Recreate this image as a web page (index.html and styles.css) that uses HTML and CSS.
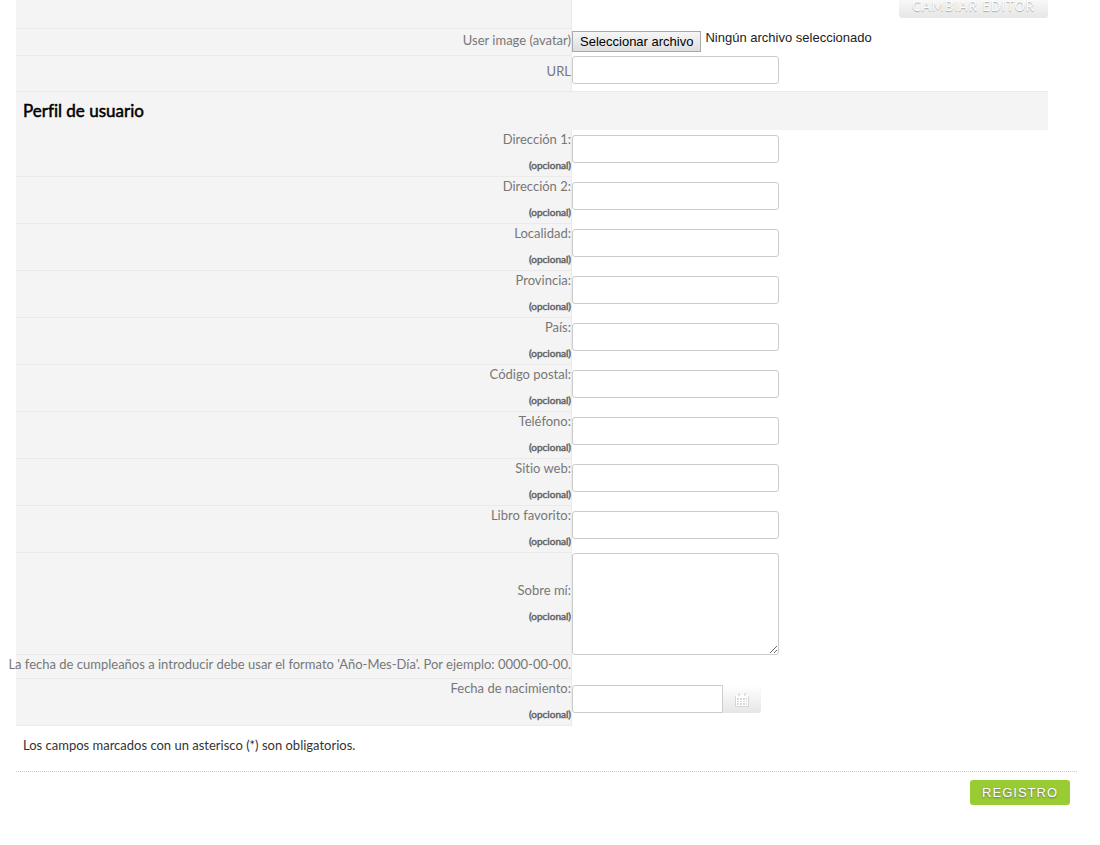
FILE: index.html
```html
<!DOCTYPE html>
<html lang="es">
<head>
<meta charset="UTF-8">
<meta name="viewport" content="width=device-width, initial-scale=1.0">
<title>Registro</title>
<link rel="stylesheet" href="styles.css">
</head>
<body>

<form class="container">
  <div class="fields">
    <div class="row row-editor">
      <div class="name"></div>
      <div class="field"><button type="button" class="btn-grey">CAMBIAR EDITOR</button></div>
    </div>
    <div class="row row-file">
      <div class="name"><label for="avatar">User image (avatar)</label></div>
      <div class="field">
        <input type="file" id="avatar" class="file-input">
        <label for="avatar" class="file-button">Seleccionar archivo</label>
        <span class="file-text">Ningún archivo seleccionado</span>
      </div>
    </div>
    <div class="row row-url">
      <div class="name"><label for="url">URL</label></div>
      <div class="field"><input type="text" id="url"></div>
    </div>

    <h2>Perfil de usuario</h2>

    <div class="row">
      <div class="name"><label for="direccion1">Dirección 1:</label><small>(opcional)</small></div>
      <div class="field"><input type="text" id="direccion1"></div>
    </div>
    <div class="row">
      <div class="name"><label for="direccion2">Dirección 2:</label><small>(opcional)</small></div>
      <div class="field"><input type="text" id="direccion2"></div>
    </div>
    <div class="row">
      <div class="name"><label for="localidad">Localidad:</label><small>(opcional)</small></div>
      <div class="field"><input type="text" id="localidad"></div>
    </div>
    <div class="row">
      <div class="name"><label for="provincia">Provincia:</label><small>(opcional)</small></div>
      <div class="field"><input type="text" id="provincia"></div>
    </div>
    <div class="row">
      <div class="name"><label for="pais">País:</label><small>(opcional)</small></div>
      <div class="field"><input type="text" id="pais"></div>
    </div>
    <div class="row">
      <div class="name"><label for="postal">Código postal:</label><small>(opcional)</small></div>
      <div class="field"><input type="text" id="postal"></div>
    </div>
    <div class="row">
      <div class="name"><label for="telefono">Teléfono:</label><small>(opcional)</small></div>
      <div class="field"><input type="text" id="telefono"></div>
    </div>
    <div class="row">
      <div class="name"><label for="web">Sitio web:</label><small>(opcional)</small></div>
      <div class="field"><input type="text" id="web"></div>
    </div>
    <div class="row">
      <div class="name"><label for="libro">Libro favorito:</label><small>(opcional)</small></div>
      <div class="field"><input type="text" id="libro"></div>
    </div>
    <div class="row row-about">
      <div class="name"><label for="sobre">Sobre mí:</label><small>(opcional)</small></div>
      <div class="field"><textarea id="sobre"></textarea></div>
    </div>
    <div class="row">
      <div class="name name-help">La fecha de cumpleaños a introducir debe usar el formato 'Año-Mes-Día'. Por ejemplo: 0000-00-00.</div>
      <div class="field"></div>
    </div>
    <div class="row">
      <div class="name"><label for="fecha">Fecha de nacimiento:</label><small>(opcional)</small></div>
      <div class="field">
        <input type="text" id="fecha" class="date-input">
        <button type="button" class="btn-grey btn-date" aria-label="Calendario">
          <svg width="14" height="14" viewBox="0 0 14 14">
            <path d="M0 3h14v11H0z" fill="#d6d6d6"/>
            <path d="M1 2h12v11H1z" fill="#fff"/>
            <path d="M3 0h2v3H3zM9 0h2v3H9z" fill="#e2e2e2"/>
            <path d="M2 5h2v2H2zM5 5h2v2H5zM8 5h2v2H8zM11 5h1v2h-1zM2 8h2v1H2zM5 8h2v1H5zM8 8h2v1H8zM11 8h1v1h-1zM2 10h2v2H2zM5 10h2v2H5zM8 10h2v2H8zM11 10h1v2h-1z" fill="#d8d8d8"/>
          </svg>
        </button>
      </div>
    </div>
  </div>

  <p class="note">Los campos marcados con un asterisco (*) son obligatorios.</p>

  <div class="actions">
    <button type="submit" class="btn-green">REGISTRO</button>
  </div>
</form>

</body>
</html>
```
FILE: styles.css
```css
* {
  box-sizing: border-box;
}

body {
  font-family: Lato, sans-serif;
  font-size: 13px;
  line-height: 18px;
  font-variant-ligatures: none;
  color: #333;
  background-color: #fff;
  margin: 0;
}

.container {
  margin: 0 23px 0 16px;
}

.fields {
  margin-right: 29px;
}

/* Rows */
.row {
  display: grid;
  grid-template-columns: minmax(0, 556fr) minmax(0, 476fr);
}

.name {
  display: flex;
  flex-direction: column;
  align-items: flex-end;
  justify-content: center;
  padding-bottom: 2px;
  color: #777;
  background-color: #f4f4f4;
  border-right: 1px solid #eaeaea;
  border-bottom: 1px solid #eaeaea;
}

.name-help {
  padding-bottom: 5px;
  white-space: nowrap;
}

small {
  margin-top: 8px;
  font-size: 10px;
  color: #666;
  -webkit-text-stroke: 0.5px #666;
}

.field {
  display: flex;
  align-items: flex-start;
  padding-top: 5px;
}

.row-editor {
  height: 29px;
  grid-template-rows: 100%;
}

.row-editor .field {
  align-items: flex-end;
  justify-content: flex-end;
  padding: 0 0 11px;
}

.row-file {
  height: 27px;
}

.row-file .name {
  padding-bottom: 4px;
}

.row-url {
  height: 36px;
}

.row-url .name {
  padding-bottom: 6px;
}

.row-url .field,
.row-about .field {
  padding-top: 0;
}

h2 {
  margin: -1px 0 0;
  padding: 10px 7px;
  font-size: 17px;
  line-height: 18px;
  font-weight: normal;
  color: #000;
  -webkit-text-stroke: 0.5px #000;
  background-color: #f4f4f4;
  border-top: 1px solid #eaeaea;
}

/* Inputs */
input[type="text"],
textarea {
  width: 207px;
  height: 28px;
  padding: 4px 6px;
  border: 1px solid #ccc;
  border-radius: 3px;
  font-family: Lato, sans-serif;
  font-size: 13px;
}

textarea {
  display: block;
  height: 102px;
}

input.date-input {
  width: 151px;
  margin-top: 1px;
  border-radius: 3px 0 0 3px;
}

.row-file .field {
  position: relative;
  padding-top: 2px;
  font-family: "Liberation Sans", sans-serif;
  font-size: 13px;
  color: #222;
}

.file-input {
  position: absolute;
  width: 300px;
  opacity: 0;
}

.file-button {
  height: 21px;
  padding: 1px 7px;
  border: 1px solid #a9a9a9;
  background: linear-gradient(#f6f6f6, #dedede);
  color: #000;
}

.file-text {
  margin: -2px 0 0 4px;
}

/* Buttons */
button {
  border: none;
  border-radius: 3px;
  cursor: pointer;
}

.btn-grey {
  flex: none;
  height: 25px;
  padding: 0 13px;
  font-family: Lato, sans-serif;
  font-size: 13px;
  letter-spacing: 1px;
  color: #fff;
  text-shadow: 0 1px 1px #aaa;
  background: linear-gradient(#fff, #e6e6e6);
}

.btn-date {
  height: 28px;
  width: 38px;
  padding: 4px 0 0;
  margin-top: 1px;
  border-radius: 0 3px 3px 0;
}

.note {
  margin: 0;
  padding: 10px 7px 17px;
}

/* Bottom bar */
.actions {
  display: flex;
  justify-content: flex-end;
  padding: 8px 7px;
  border-top: 1px dotted #ccc;
}

.btn-green {
  height: 25px;
  padding: 0 12px;
  font-family: "Liberation Sans", sans-serif;
  font-size: 13px;
  letter-spacing: 1px;
  color: #fff;
  text-shadow: 0 1px 2px #666;
  background-color: #9c3;
}
```
